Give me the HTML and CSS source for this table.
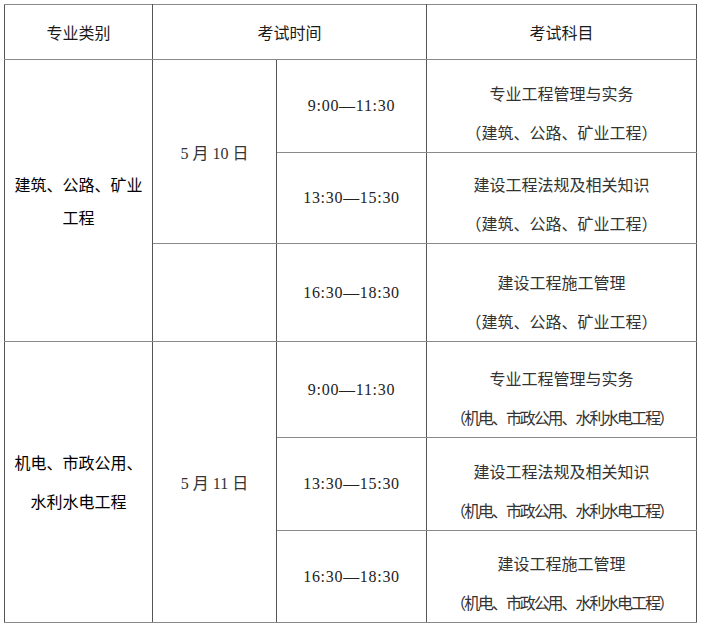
FILE: index.html
```html
<!DOCTYPE html>
<html lang="zh-CN">
<head>
<meta charset="utf-8">
<title>考试时间安排</title>
<link rel="stylesheet" href="styles.css">
</head>
<body>
<div class="page">
<table class="exam">
  <colgroup>
    <col class="c-cat">
    <col class="c-date">
    <col class="c-time">
    <col class="c-subj">
  </colgroup>
  <thead>
    <tr class="r-head">
      <th>专业类别</th>
      <th colspan="2">考试时间</th>
      <th>考试科目</th>
    </tr>
  </thead>
  <tbody>
    <tr class="r1">
      <td rowspan="3" class="cat cat-a">建筑、公路、矿业<br>工程</td>
      <td rowspan="2" class="date">5 月 10 日</td>
      <td class="time">9:00—11:30</td>
      <td class="subj"><div>专业工程管理与实务</div><div>（建筑、公路、矿业工程）</div></td>
    </tr>
    <tr class="r2">
      <td class="time">13:30—15:30</td>
      <td class="subj"><div>建设工程法规及相关知识</div><div>（建筑、公路、矿业工程）</div></td>
    </tr>
    <tr class="r3">
      <td class="date"></td>
      <td class="time">16:30—18:30</td>
      <td class="subj"><div>建设工程施工管理</div><div>（建筑、公路、矿业工程）</div></td>
    </tr>
    <tr class="r4">
      <td rowspan="3" class="cat cat-b">机电、市政公用、<br>水利水电工程</td>
      <td rowspan="3" class="date">5 月 11 日</td>
      <td class="time">9:00—11:30</td>
      <td class="subj"><div>专业工程管理与实务</div><div class="narrow">（机电、市政公用、水利水电工程）</div></td>
    </tr>
    <tr class="r5">
      <td class="time">13:30—15:30</td>
      <td class="subj"><div>建设工程法规及相关知识</div><div class="narrow">（机电、市政公用、水利水电工程）</div></td>
    </tr>
    <tr class="r6">
      <td class="time">16:30—18:30</td>
      <td class="subj"><div>建设工程施工管理</div><div class="narrow">（机电、市政公用、水利水电工程）</div></td>
    </tr>
  </tbody>
</table>
</div>
</body>
</html>
```

FILE: styles.css
```css
html, body {
  margin: 0;
  padding: 0;
  background: #ffffff;
}

.page {
  padding: 4px 6px 0 4px;
}

.exam {
  width: 692px;
  border-collapse: collapse;
  table-layout: fixed;
  font-family: "Noto Sans CJK SC", "Liberation Sans", sans-serif;
  font-size: 16px;
  color: #222;
}

.c-cat { width: 148px; }
.c-date { width: 124px; }
.c-time { width: 150px; }
.c-subj { width: 270px; }

.exam th,
.exam td {
  border-top: 1px solid #8a8a8a;
  border-bottom: 1px solid #8a8a8a;
  border-left: 1px solid #555;
  border-right: 1px solid #555;
  text-align: center;
  vertical-align: middle;
  padding: 0;
}

.exam th {
  font-weight: normal;
  color: #1a1a1a;
}

.r-head { height: 55px; }
.r1 { height: 93px; }
.r2 { height: 91px; }
.r3 { height: 98px; }
.r4 { height: 96px; }
.r5 { height: 93px; }
.r6 { height: 92px; }

.cat {
  padding: 0 4px;
  white-space: nowrap;
  font-weight: normal;
  color: #000;
}

.cat-a {
  line-height: 33px;
  padding-top: 10px;
}

.cat-b {
  line-height: 39px;
  padding-top: 6px;
}

.date {
  font-family: "Liberation Serif", "Noto Sans CJK SC", serif;
  font-size: 16px;
  color: #333;
  white-space: pre;
}

.time {
  font-family: "Liberation Serif", serif;
  font-size: 16px;
  letter-spacing: 0.7px;
  padding-top: 2px;
  color: #222;
}

.exam .subj {
  line-height: 39px;
  vertical-align: bottom;
  color: #333;
}

.subj .narrow {
  letter-spacing: -2.1px;
}
```
